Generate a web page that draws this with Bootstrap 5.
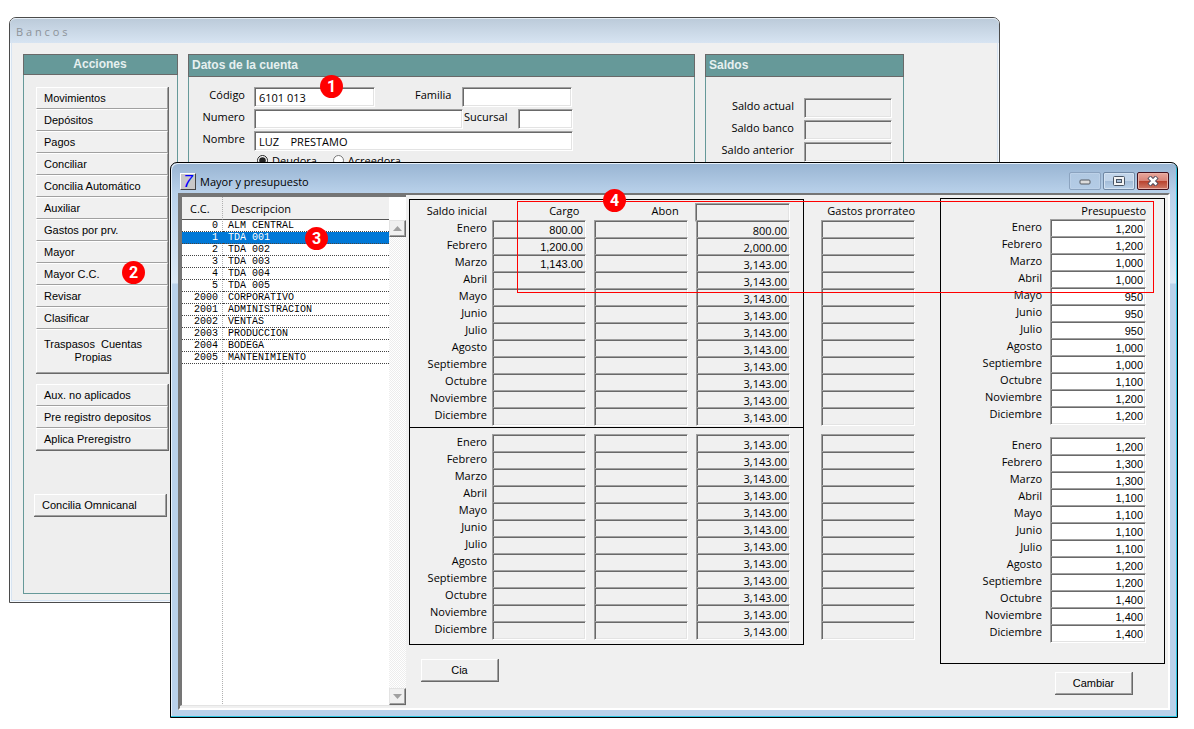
<!DOCTYPE html>
<html lang="es">
<head>
<meta charset="utf-8">
<meta name="viewport" content="width=device-width, initial-scale=1">
<title>Bancos - Mayor y presupuesto</title>
<link rel="stylesheet" href="https://cdn.jsdelivr.net/npm/bootstrap@5.3.0/dist/css/bootstrap.min.css">
<style>
  :root { --face: #f0f0f0; --teal: #669999; --edge: #696969; --shade: #a0a0a0; --hilite: #fff; }
  body { background: #fff; color: #000; font: 11px/13px "Open Sans", "Noto Sans", sans-serif; }
  .desktop { display: grid; grid-template-columns: minmax(0, 1fr); min-height: 100vh; align-items: start; }
  .desktop > section { grid-area: 1 / 1; }

  /* window frames */
  .win { border: 1px solid #000; border-radius: 7px 7px 0 0; }
  .win-back { margin: 17px 194px 0 9px; border-color: #4b4b4b; background: var(--face); padding-bottom: 8px; box-shadow: inset 0 0 0 1px #f5f9fd, inset 0 0 0 2px #d7e4f2; }
  .win-back > .titlebar { height: 25px; padding: 0 6px; color: #8d9399; background: linear-gradient(#bccbda, #d7e4f2); border-radius: 6px 6px 0 0; white-space: pre; border-top: 1px solid #e6eef6; }
  .win-front { z-index: 1; margin: 162px 16px 0 170px; padding: 0 7px 7px; background: linear-gradient(#98b4d2, #b9d1ea 30px, #dce9f6 120px, #b9d1ea 121px); box-shadow: inset -1px -1px 0 #2cc4e0, inset 1px 1px 0 #e8f2fb; }
  .win-front > .titlebar { height: 30px; padding: 7px 1px 0 2px; }
  .title-text { padding: 5px 0 0 4px; }
  .win-btns { gap: 2px; padding-top: 2px; }
  .seven { width: 16px; height: 17px; margin-top: 3px; background: #c8c8c8; border: 1px solid; border-color: #fff #444 #444 #fff; color: #00f; font: italic 18px/16px "Liberation Mono", monospace; text-align: center; }
  .win-btn { width: 32px; height: 18px; padding: 0; border: 1px solid #6f87a3; border-radius: 2px; background: linear-gradient(#c2d5ea 50%, #a3bcd8 50%, #b9d1ea); box-shadow: inset 0 0 0 1px #d5e3f2; display: flex; align-items: center; justify-content: center; }
  .win-btn.faded { background: linear-gradient(#b0c8e1, #b4cce6); box-shadow: inset 0 0 0 1px #bcd1e8; border-color: #8ba3bf; }
  .win-btn.closer { border-color: #43101c; background: linear-gradient(#e8a79c, #d98579 48%, #b8402c 50%, #cf7a68); box-shadow: inset 0 0 0 1px #eab0a6; }

  /* group panels of the back window */
  .back-client { gap: 10px; padding: 11px 95px 0 13px; }
  .panel-head { background: var(--teal); border: 1px solid var(--edge); color: #e6f0f0; font: bold 12px/21px "Liberation Sans", sans-serif; margin: 0; padding: 0 4px 0 3px; }
  .panel-body { border: 1px solid var(--teal); border-top: 0; background: #eee; }
  .acciones { width: 155px; }
  .acciones .panel-head { line-height: 19px; }
  .acciones .panel-body { height: 519px; padding: 12px 8px 0 12px; }
  .saldos { width: 199px; }
  .datos .panel-body, .saldos .panel-body { min-height: 130px; }
  .datos .panel-body { padding: 10px 0 0 11px; }
  .saldos .panel-body { padding: 21px 11px 0 0; }

  .push { border: 1px solid; border-color: var(--hilite) var(--shade) var(--shade) var(--hilite); background: var(--face); color: #000; font: 11px/13px "Liberation Sans", sans-serif; height: 22px; padding: 0 7px; text-align: left; display: block; border-radius: 0; }
  .push-group { width: 133px; border: solid var(--edge); border-width: 0 1px 1px 0; }
  .push-group .push { width: 100%; }
  .push.tall { height: 44px; white-space: pre; }
  .group-two { margin-top: 10px; }
  .push-lone { margin: 43px 0 0 -2px; }
  .boxed { width: 78px; border: solid var(--edge); border-width: 0 1px 1px 0; }
  .boxed .push { width: 77px; text-align: center; }

  /* sunken fields */
  .sunk { border: 1px solid; border-color: var(--shade) #fff #fff var(--shade); box-shadow: inset 1px 1px 0 var(--edge), inset -1px -1px 0 #e3e3e3; background: #fff; color: #000; font: inherit; padding: 1px 3px 0 4px; min-width: 0; height: 20px; border-radius: 0; display: block; }
  .sunk:read-only { background: var(--face); }
  .form-line { height: 22px; display: flex; align-items: flex-start; }
  .form-line label { line-height: 15px; white-space: nowrap; }
  .form-line .lead-label { width: 45px; margin-right: 9px; text-align: right; }
  .w-code { width: 121px; }
  .w-num { width: 209px; }
  .w-fam { width: 110px; }
  .w-suc { width: 55px; }
  .w-nom { width: 319px; }
  .w-bal { width: 88px; }
  .fam-label { margin: 0 11px 0 40px; }
  .suc-label { width: 45px; margin-right: 10px; padding-left: 1px; }
  .bal { margin-right: 10px; }
  .radio-line { padding-left: 54px; }
  .opt { width: 11px; height: 11px; margin: 2px 4px 0 3px; accent-color: #222; }
  .opt-b { margin-left: 16px; }

  /* list on the left */
  .client { border: 2px solid; border-color: #757575 #fff #fff #757575; background: var(--face); position: relative; }
  .cc-list { width: 226px; margin-bottom: 2px; border: solid; border-width: 2px 0 1px 2px; border-color: #757575 transparent #e3e3e3 #757575; background: #fff; position: relative; }
  .cc-pane { background: repeating-linear-gradient(#b0b0b0 0 1px, transparent 1px 2px) 40px 0 / 1px 100% no-repeat; }
  .cc-table { width: 100%; border-collapse: separate; border-spacing: 0; table-layout: fixed; }
  .cc-table th { height: 23px; background: var(--face); border-bottom: 1px solid #555; font-weight: 400; padding: 0 8px; }
  .cc-table th:first-child { width: 41px; border-right: 1px dotted #b0b0b0; }
  .cc-table td { height: 12px; padding: 1px 5px 0; border-bottom: 1px dotted #444; font: 10px/10px "Liberation Mono", monospace; }
  .cc-table td:first-child { text-align: right; }
  .cc-table .picked td { background: #0078d7; color: #fff; }
  .track { width: 17px; margin-top: 23px; background: repeating-conic-gradient(#ededed 0 25%, #fff 0 50%) 0 0 / 2px 2px; }
  .arrow { width: 17px; height: 17px; padding: 0; background: var(--face); border: 1px solid; border-color: #e3e3e3 var(--edge) var(--edge) #e3e3e3; box-shadow: inset -1px -1px 0 var(--shade); display: flex; align-items: center; justify-content: center; }

  /* monthly grids */
  .ledger { padding: 3px 3px 13px; }
  .c-main { flex: 395 1 0; margin-top: 1px; }
  .c-gastos { flex: 94 1 0; margin: 0 25px 0 17px; }
  .c-pres { flex: 225 1 0; }
  .rule-box { border: 1px solid #000; }
  .month { display: flex; height: 17px; }
  .month label, .head-label { line-height: 15px; text-align: right; white-space: nowrap; }
  .c-main label, .c-main .first-head { width: 82px; padding-right: 5px; }
  .month .sunk { flex: 1 1 0; width: 0; height: 19px; padding-right: 2px; text-align: right; }
  .month .plain-num { font-family: "Liberation Sans", sans-serif; }
  .cells { display: flex; flex: 1 1 0; gap: 8px; min-width: 0; }
  .cells > * { flex: 1 1 0; }
  .half { padding-right: 13px; }
  .first-half { padding-top: 3px; padding-bottom: 3px; }
  .last-half { padding-top: 6px; padding-bottom: 6px; border-top: 1px solid #000; }
  .gastos-head { height: 22px; padding-top: 5px; }
  .gastos-two { margin-top: 10px; }
  .pres-head { height: 20px; padding: 4px 18px 0 0; }
  .pres-two { margin-top: 14px; }
  .pres-box { padding-bottom: 22px; }
  .c-pres label { flex: 1 1 0; padding-right: 8px; }
  .c-pres .month { padding-right: 18px; }
  .c-pres .month .sunk { flex: 0 0 96px; }
  .cia-btn { margin: 14px 0 0 12px; }
  .cambiar-btn { margin: 8px 32px 0 auto; }

  /* numbered marks over the windows */
  .pin { position: absolute; z-index: 3; width: 23px; height: 23px; border-radius: 50%; background: #f00; color: #fff; font: bold 16px/23px Roboto, sans-serif; text-align: center; }
  .pin-1 { left: 120px; top: -12px; }
  .pin-2 { left: 86px; top: 174px; }
  .pin-3 { left: 123px; top: 30px; }
  .pin-4 { left: 85px; top: -13px; }
  .red-frame { position: absolute; z-index: 2; left: 337px; right: 14px; top: 6px; height: 92px; border: 1px solid #f00; pointer-events: none; }
</style>
</head>
<body>
<main class="desktop">
  <section class="win win-back" aria-label="Bancos">
    <div class="titlebar d-flex align-items-center">B a n c o s</div>
    <div class="back-client d-flex align-items-start">
      <div class="acciones flex-shrink-0">
        <h2 class="panel-head text-center">Acciones</h2>
        <div class="panel-body">
          <div class="push-group position-relative">
            <button class="push">Movimientos</button>
            <button class="push">Depósitos</button>
            <button class="push">Pagos</button>
            <button class="push">Conciliar</button>
            <button class="push">Concilia Automático</button>
            <button class="push">Auxiliar</button>
            <button class="push">Gastos por prv.</button>
            <button class="push">Mayor</button>
            <button class="push">Mayor C.C.</button>
            <button class="push">Revisar</button>
            <button class="push">Clasificar</button>
            <button class="push tall">Traspasos  Cuentas
          Propias</button>
            <span class="pin pin-2">2</span>
          </div>
          <div class="push-group group-two">
            <button class="push">Aux. no aplicados</button>
            <button class="push">Pre registro depositos</button>
            <button class="push">Aplica Preregistro</button>
          </div>
          <div class="push-group push-lone">
            <button class="push">Concilia Omnicanal</button>
          </div>
        </div>
      </div>
      <div class="datos flex-fill">
        <h2 class="panel-head">Datos de la cuenta</h2>
        <div class="panel-body">
          <div class="position-relative">
            <div class="form-line">
              <label class="lead-label" for="codigo">Código</label>
              <input class="sunk w-code" id="codigo" value="6101 013">
              <label class="fam-label" for="familia">Familia</label>
              <input class="sunk w-fam" id="familia">
            </div>
            <div class="form-line">
              <label class="lead-label" for="numero">Numero</label>
              <input class="sunk w-num" id="numero">
              <label class="suc-label" for="sucursal">Sucursal</label>
              <input class="sunk w-suc" id="sucursal">
            </div>
            <div class="form-line">
              <label class="lead-label" for="nombre">Nombre</label>
              <input class="sunk w-nom" id="nombre" value="LUZ    PRESTAMO">
            </div>
            <div class="form-line radio-line">
              <input class="opt" type="radio" name="tipo" id="deudora" checked><label for="deudora">Deudora</label>
              <input class="opt opt-b" type="radio" name="tipo" id="acreedora"><label for="acreedora">Acreedora</label>
            </div>
            <span class="pin pin-1">1</span>
          </div>
        </div>
      </div>
      <div class="saldos flex-shrink-0">
        <h2 class="panel-head">Saldos</h2>
        <div class="panel-body">
          <div class="form-line justify-content-end"><label class="bal" for="sact">Saldo actual</label><input class="sunk w-bal" id="sact" readonly></div>
          <div class="form-line justify-content-end"><label class="bal" for="sban">Saldo banco</label><input class="sunk w-bal" id="sban" readonly></div>
          <div class="form-line justify-content-end"><label class="bal" for="sant">Saldo anterior</label><input class="sunk w-bal" id="sant" readonly></div>
        </div>
      </div>
    </div>
  </section>

  <section class="win win-front" aria-label="Mayor y presupuesto">
    <div class="titlebar d-flex align-items-start">
      <span class="seven">7</span>
      <span class="title-text flex-fill">Mayor y presupuesto</span>
      <div class="win-btns d-flex">
        <button class="win-btn faded" aria-label="Minimizar"><svg width="12" height="8"><rect x="1" y="3" width="10" height="4" rx="1" fill="#ddd" stroke="#555b63"/></svg></button>
        <button class="win-btn" aria-label="Maximizar"><svg width="12" height="10"><rect x=".5" y=".5" width="11" height="9" rx="1" fill="#f4f4f4" stroke="#4a5564"/><rect x="3.500" y="3.500" width="5" height="3" fill="#a9bfd9" stroke="#4a5564"/></svg></button>
        <button class="win-btn closer" aria-label="Cerrar"><svg width="12" height="10"><path d="M2 1 10 9M10 1 2 9" stroke="#4a4a5c" stroke-width="4.500"/><path d="M2.500 1.500 9.500 8.500M9.500 1.500 2.500 8.500" stroke="#fff" stroke-width="2.500"/></svg></button>
      </div>
    </div>
    <div class="client d-flex">
      <div class="cc-list d-flex flex-shrink-0">
        <div class="cc-pane flex-fill">
          <table class="cc-table">
            <thead><tr><th>C.C.</th><th>Descripcion</th></tr></thead>
            <tbody>
              <tr><td>0</td><td>ALM CENTRAL</td></tr>
              <tr class="picked"><td>1</td><td>TDA 001</td></tr>
              <tr><td>2</td><td>TDA 002</td></tr>
              <tr><td>3</td><td>TDA 003</td></tr>
              <tr><td>4</td><td>TDA 004</td></tr>
              <tr><td>5</td><td>TDA 005</td></tr>
              <tr><td>2000</td><td>CORPORATIVO</td></tr>
              <tr><td>2001</td><td>ADMINISTRACION</td></tr>
              <tr><td>2002</td><td>VENTAS</td></tr>
              <tr><td>2003</td><td>PRODUCCION</td></tr>
              <tr><td>2004</td><td>BODEGA</td></tr>
              <tr><td>2005</td><td>MANTENIMIENTO</td></tr>
            </tbody>
          </table>
        </div>
        <div class="track d-flex flex-column justify-content-between flex-shrink-0">
          <button class="arrow" aria-label="Subir"><svg width="9" height="5"><path d="M4.500 0 9 5H0z" fill="#a0a0a0"/></svg></button>
          <button class="arrow" aria-label="Bajar"><svg width="9" height="5"><path d="M4.500 5 9 0H0z" fill="#a0a0a0"/></svg></button>
        </div>
        <span class="pin pin-3">3</span>
      </div>

      <div class="ledger d-flex align-items-start flex-fill">
        <div class="c-main">
          <div class="rule-box">
            <div class="half first-half" id="mayor-a">
              <div class="month">
                <span class="head-label first-head">Saldo inicial</span>
                <div class="cells"><span class="head-label pe-1">Cargo</span><span class="head-label pe-2">Abon</span><input class="sunk" aria-label="Saldo inicial" readonly></div>
              </div>
            </div>
            <div class="half last-half" id="mayor-b"></div>
          </div>
          <div class="boxed cia-btn"><button class="push">Cia</button></div>
        </div>
        <div class="c-gastos">
          <div class="head-label gastos-head">Gastos prorrateo</div>
          <div id="gastos-a"></div>
          <div id="gastos-b" class="gastos-two"></div>
        </div>
        <div class="c-pres">
          <div class="rule-box pres-box">
            <div class="head-label pres-head">Presupuesto</div>
            <div id="pres-a"></div>
            <div id="pres-b" class="pres-two"></div>
          </div>
          <div class="boxed cambiar-btn"><button class="push">Cambiar</button></div>
        </div>
      </div>
      <div class="red-frame"><span class="pin pin-4">4</span></div>
    </div>
  </section>
</main>
<script>
  const months = ['Enero','Febrero','Marzo','Abril','Mayo','Junio','Julio','Agosto','Septiembre','Octubre','Noviembre','Diciembre'];
  const cargo = ['800.00', '1,200.00', '1,143.00'];
  const saldoA = ['800.00', '2,000.00', ...Array(10).fill('3,143.00')];
  const saldoB = Array(12).fill('3,143.00');
  const presA = ['1,200','1,200','1,000','1,000','950','950','950','1,000','1,000','1,100','1,200','1,200'];
  const presB = ['1,200','1,300','1,300','1,100','1,100','1,100','1,100','1,200','1,200','1,400','1,400','1,400'];
  const field = (id, name, value, extra) => `<input class="sunk ${extra}" id="${id}" aria-label="${name}" value="${value || ''}"`;

  function mayor(target, debits, balances) {
    document.getElementById(target).insertAdjacentHTML('beforeend', months.map((m, i) => `<div class="month">
      <label for="${target}-c${i}">${m}</label><div class="cells">
      ${field(`${target}-c${i}`, m + ' cargo', debits[i], 'plain-num')} readonly>
      ${field(`${target}-a${i}`, m + ' abono', '', 'plain-num')} readonly>
      ${field(`${target}-s${i}`, m + ' saldo', balances[i], '')} readonly></div></div>`).join(''));
  }
  function gastos(target) {
    document.getElementById(target).innerHTML = months.map((m, i) =>
      `<div class="month">${field(target + i, m + ' gastos', '', '')} readonly></div>`).join('');
  }
  function presupuesto(target, values) {
    document.getElementById(target).innerHTML = months.map((m, i) =>
      `<div class="month"><label for="${target}${i}">${m}</label>${field(target + i, m + ' presupuesto', values[i], 'plain-num')}></div>`).join('');
  }
  mayor('mayor-a', cargo, saldoA);
  mayor('mayor-b', [], saldoB);
  gastos('gastos-a');
  gastos('gastos-b');
  presupuesto('pres-a', presA);
  presupuesto('pres-b', presB);
</script>
<script src="https://cdn.jsdelivr.net/npm/bootstrap@5.3.0/dist/js/bootstrap.bundle.min.js"></script>
</body>
</html>
